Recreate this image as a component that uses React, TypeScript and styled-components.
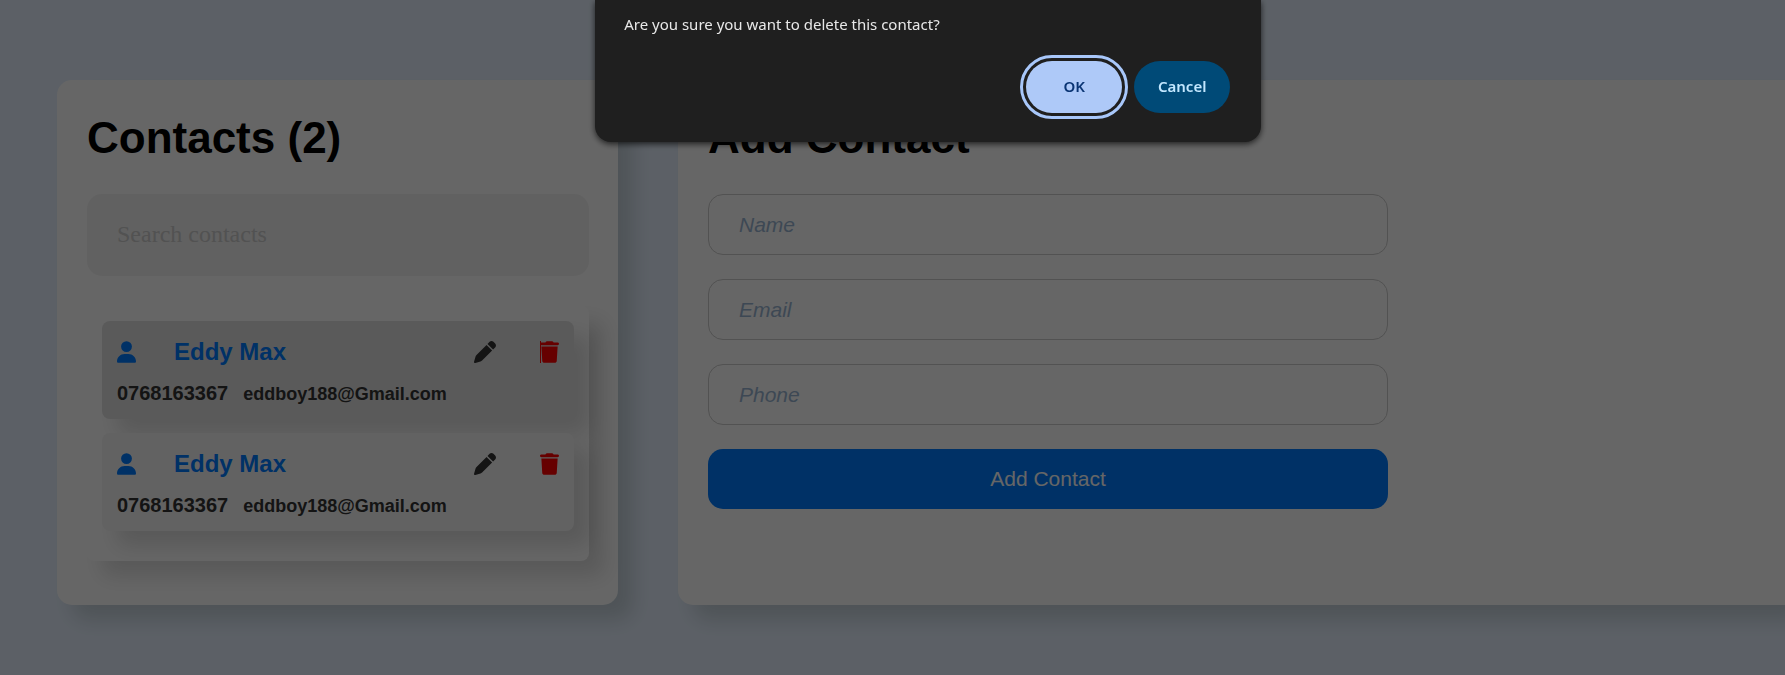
import React, { useId } from "react";
import styled, { createGlobalStyle } from "styled-components";
import { FaUser, FaPen, FaTrash } from "react-icons/fa6";

const GlobalStyle = createGlobalStyle`
  * { box-sizing: border-box; }
  body {
    margin: 0;
    background: #e6f1ff;
    font-family: "Franklin Gothic Medium", "Liberation Sans", Arial, sans-serif;
    color: #000;
    overflow: hidden;
  }
`;

const Page = styled.main`
  display: flex;
  gap: 60px;
  min-height: 100vh;
  padding: 80px 0 70px 57px;
`;

const Card = styled.section`
  padding: 30px;
  background: #fff;
  border-radius: 15px;
  box-shadow: 15px 15px 20px rgba(0, 30, 0, 0.15);
`;

const ContactsCard = styled(Card)`
  flex: 0 0 561px;
  padding-right: 29px;
`;

const FormCard = styled(Card)`
  flex: 1;
  min-width: 0;
  border-top-right-radius: 0;
  border-bottom-right-radius: 0;
`;

const Title = styled.h1`
  margin: 0 0 28px;
  font-size: 44px;
  line-height: 56px;
  font-weight: 700;
`;

const Search = styled.input`
  display: block;
  width: 100%;
  height: 82px;
  padding: 0 30px 2px;
  border: 0;
  border-radius: 15px;
  background: #f3f3f3;
  font: 24px "Liberation Serif", "Times New Roman", serif;
  &::placeholder { color: #ccc; opacity: 1; }
`;

const List = styled.ul`
  display: flex;
  flex-direction: column;
  gap: 14px;
  margin: 30px 0 0;
  padding: 15px 15px 30px;
  list-style: none;
  border-radius: 8px;
  box-shadow: 15px 15px 20px rgba(0, 0, 0, 0.13);
`;

const Item = styled.li<{ $active?: boolean }>`
  height: 98px;
  padding: 15px;
  border-radius: 8px;
  background: ${(p) => (p.$active ? "#e1e1e1" : "#f5f5f5")};
  box-shadow: 15px 15px 20px rgba(0, 0, 0, 0.13);
`;

const ItemHead = styled.div`
  display: flex;
  align-items: center;
  height: 32px;
  color: #007bff;
`;

const UserIcon = styled(FaUser)`
  width: 19px;
  height: 22px;
`;

const PenIcon = styled(FaPen)`
  width: 22px;
  height: 22px;
`;

const TrashIcon = styled(FaTrash)`
  width: 19px;
  height: 22px;
`;

const Name = styled.h2`
  flex: 1;
  margin: 0 0 0 38px;
  font-size: 24px;
  line-height: 32px;
`;

const IconButton = styled.button<{ $color: string }>`
  display: flex;
  margin-left: 44px;
  padding: 0;
  border: 0;
  background: none;
  color: ${(p) => p.$color};
`;

const Caret = styled.span`
  width: 1px;
  height: 22px;
  margin-right: -1px;
  background: #f00;
`;

const Details = styled.p`
  display: flex;
  align-items: baseline;
  gap: 15px;
  margin: 13px 0 0;
  color: #333;
  font-weight: 700;
  font-size: 18px;
  line-height: 24px;
`;

const Phone = styled.span`
  font-size: 20px;
`;

const Form = styled.form`
  display: flex;
  flex-direction: column;
  gap: 24px;
  max-width: 680px;
`;

const Field = styled.input`
  height: 61px;
  padding: 0 30px;
  border: 1px solid #ccc;
  border-radius: 15px;
  background: #fff;
  font: 21px "Liberation Sans", Arial, sans-serif;
  &::placeholder { color: #9ab5d3; font-style: italic; opacity: 1; }
`;

const Submit = styled.button`
  height: 60px;
  border: 0;
  border-radius: 15px;
  background: #007bff;
  color: #fff;
  font: 21px "Liberation Sans", Arial, sans-serif;
`;

const Backdrop = styled.div`
  position: fixed;
  inset: 0;
  background: rgba(0, 0, 0, 0.6);
`;

const Dialog = styled.div`
  position: absolute;
  top: 0;
  left: 52%;
  transform: translateX(-50%);
  width: 666px;
  padding: 12px 31px 29px 29px;
  border-radius: 0 0 16px 16px;
  background: #1f1f1f;
  box-shadow: 0 2px 6px rgba(0, 0, 0, 0.7);
  color: #e8e8e8;
  font-family: "Segoe UI", "Noto Sans", sans-serif;
`;

const Message = styled.p`
  margin: 0 0 25px;
  font-size: 15px;
  line-height: 24px;
`;

const Actions = styled.div`
  display: flex;
  justify-content: flex-end;
  gap: 12px;
`;

const Action = styled.button<{ $primary?: boolean }>`
  width: 96px;
  height: 52px;
  padding: 0 0 2px;
  border: 0;
  border-radius: 26px;
  background: ${(p) => (p.$primary ? "#aec9f8" : "#004a77")};
  color: ${(p) => (p.$primary ? "#0b3574" : "#c2e7ff")};
  font: 600 15px "Segoe UI", "Noto Sans", sans-serif;
  outline: ${(p) => (p.$primary ? "3px solid #a8c7fa" : "none")};
  outline-offset: 3px;
`;

const contacts = [
  { id: 1, name: "Eddy Max", phone: "0768163367", email: "eddboy188@Gmail.com" },
  { id: 2, name: "Eddy Max", phone: "0768163367", email: "eddboy188@Gmail.com" },
];

export default function App() {
  const messageId = useId();
  return (
    <>
      <GlobalStyle />
      <Page>
        <ContactsCard>
          <Title>Contacts ({contacts.length})</Title>
          <Search type="search" placeholder="Search contacts" aria-label="Search contacts" />
          <List>
            {contacts.map((c, i) => (
              <Item key={c.id} $active={i === 0}>
                <ItemHead>
                  <UserIcon aria-hidden />
                  <Name>{c.name}</Name>
                  <IconButton type="button" aria-label="Edit contact" $color="#333">
                    <PenIcon />
                  </IconButton>
                  <IconButton type="button" aria-label="Delete contact" $color="#f00">
                    {i === 0 && <Caret />}
                    <TrashIcon />
                  </IconButton>
                </ItemHead>
                <Details>
                  <Phone>{c.phone}</Phone>
                  <span>{c.email}</span>
                </Details>
              </Item>
            ))}
          </List>
        </ContactsCard>
        <FormCard>
          <Title>Add Contact</Title>
          <Form onSubmit={(e) => e.preventDefault()}>
            <Field type="text" placeholder="Name" aria-label="Name" />
            <Field type="email" placeholder="Email" aria-label="Email" />
            <Field type="tel" placeholder="Phone" aria-label="Phone" />
            <Submit type="submit">Add Contact</Submit>
          </Form>
        </FormCard>
      </Page>
      <Backdrop>
        <Dialog role="alertdialog" aria-modal="true" aria-labelledby={messageId}>
          <Message id={messageId}>Are you sure you want to delete this contact?</Message>
          <Actions>
            <Action type="button" $primary>OK</Action>
            <Action type="button">Cancel</Action>
          </Actions>
        </Dialog>
      </Backdrop>
    </>
  );
}
